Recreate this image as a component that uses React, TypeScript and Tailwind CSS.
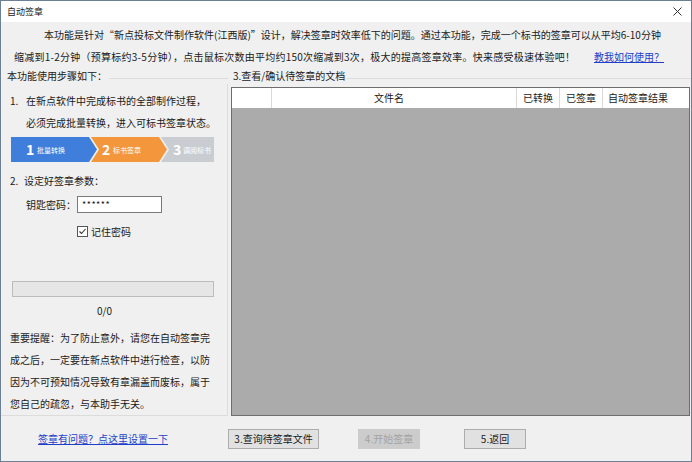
import React from 'react';

const StepBanner = () => (
  <svg width="203" height="25" viewBox="0 0 203 25" className="block">
    <polygon points="0,0 78,0 86,12.5 78,25 0,25" fill="#3f7fdb" />
    <polygon points="80,0 148,0 156,12.5 148,25 80,25 88,12.5" fill="#f4973c" />
    <polygon points="150,0 203,0 203,25 150,25 158,12.5" fill="#c9cdd2" />
    <g fill="#ffffff" fontFamily="'Noto Sans CJK SC', sans-serif">
      <text x="15" y="18" fontSize="14" fontWeight="bold">1</text>
      <text x="26" y="16" fontSize="7">批量转换</text>
      <text x="91" y="18" fontSize="14" fontWeight="bold">2</text>
      <text x="102" y="16" fontSize="7">标书签章</text>
      <text x="162" y="18" fontSize="14" fontWeight="bold">3</text>
      <text x="172" y="16" fontSize="7">调阅标书</text>
    </g>
  </svg>
);

const CheckBox = () => (
  <svg width="11" height="11" viewBox="0 0 11 11" className="block">
    <rect x="0.5" y="0.5" width="10" height="10" fill="#ffffff" stroke="#555555" />
    <path d="M2.5 5.5 L4.5 7.5 L8.5 3" fill="none" stroke="#333333" strokeWidth="1.1" />
  </svg>
);

export default function App() {
  return (
    <div className="w-[692px] h-[462px] flex flex-col bg-[#f0f0f0] border border-[#6d7f94] text-[10px] text-[#1a1a1a] overflow-hidden font-['Noto_Sans_CJK_SC','Liberation_Sans',sans-serif]">
      {/* title bar */}
      <div className="h-[21px] shrink-0 bg-white flex items-center justify-between pl-[6px] pr-[9px]">
        <span className="text-[9px]">自动签章</span>
        <svg width="9" height="9" viewBox="0 0 9 9">
          <path d="M0.5 0.5 L8.5 8.5 M8.5 0.5 L0.5 8.5" stroke="#333" strokeWidth="1" />
        </svg>
      </div>

      {/* intro */}
      <div className="pt-[2px] leading-[22px] shrink-0">
        <div className="pl-[43px] whitespace-nowrap">
          本功能是针对“新点投标文件制作软件(江西版)”设计，解决签章时效率低下的问题。通过本功能，完成一个标书的签章可以从平均6-10分钟
        </div>
        <div className="flex pl-[13px] pr-[27px] whitespace-nowrap">
          <span className="tracking-[0.25px]">缩减到1-2分钟（预算标约3-5分钟），点击鼠标次数由平均约150次缩减到3次，极大的提高签章效率。快来感受极速体验吧！</span>
          <a className="ml-auto text-[#1d3fc9] underline">教我如何使用？</a>
        </div>
      </div>

      {/* main */}
      <div className="h-[348px] shrink-0 flex">
        {/* left */}
        <div className="w-[227px] flex flex-col">
          <div className="h-[16px] flex items-center leading-[16px]">
            <span className="pl-[6px] pr-[2px] whitespace-nowrap">本功能使用步骤如下：</span>
            <div className="flex-1 border-t border-[#dcdcdc] mt-[4px]" />
          </div>
          <div className="flex-1 border-r border-b border-[#dcdcdc] flex flex-col">
            <div className="mt-[6px] flex leading-[22px] pl-[9px]">
              <span className="w-[16px]">1.</span>
              <div>
                <div>在新点软件中完成标书的全部制作过程，</div>
                <div>必须完成批量转换，进入可标书签章状态。</div>
              </div>
            </div>
            <div className="mt-[3px] ml-[10px]">
              <StepBanner />
            </div>
            <div className="mt-[8px] flex leading-[22px] pl-[9px]">
              <span className="w-[14px]">2.</span>
              <span>设定好签章参数：</span>
            </div>
            <div className="mt-[4px] flex items-center pl-[25px]">
              <span className="w-[51px]">钥匙密码：</span>
              <div className="w-[85px] h-[17px] bg-white border border-[#7a7a7a] flex items-center pl-[4px] text-[9px] tracking-[0.5px]">
                ******
              </div>
            </div>
            <div className="mt-[11px] h-[14px] flex items-center gap-[3px] pl-[76px]">
              <CheckBox />
              <span>记住密码</span>
            </div>
            <div className="mt-[43px] ml-[11px] w-[202px] h-[16px] bg-[#e6e6e6] border border-[#bcbcbc]" />
            <div className="mt-[6px] leading-[16px] pl-[96px]">0/0</div>
            <div className="mt-[8px] leading-[22px] pl-[9px] pr-[10px]">
              <div>重要提醒：为了防止意外，请您在自动签章完</div>
              <div>成之后，一定要在新点软件中进行检查，以防</div>
              <div>因为不可预知情况导致有章漏盖而废标，属于</div>
              <div>您自己的疏忽，与本助手无关。</div>
            </div>
          </div>
        </div>

        {/* right */}
        <div className="flex-1 flex flex-col">
          <div className="h-[16px] flex items-center leading-[16px]">
            <span className="pl-[5px] pr-[2px] whitespace-nowrap">3.查看/确认待签章的文档</span>
            <div className="flex-1 border-t border-[#dcdcdc] mt-[4px]" />
          </div>
          <div className="mt-[3px] ml-[3px] mr-[1px] flex-1 border border-[#6e6e6e] bg-[#ababab] flex flex-col">
            <div className="h-[20px] bg-white flex leading-[20px]">
              <div className="w-[39px]" />
              <div className="flex-1 border-l border-[#d9d9d9] text-center pr-[10px]">文件名</div>
              <div className="w-[43px] border-l border-[#d9d9d9] text-center">已转换</div>
              <div className="w-[43px] border-l border-[#d9d9d9] text-center">已签章</div>
              <div className="w-[87px] border-l border-[#d9d9d9] pl-[5px]">自动签章结果</div>
            </div>
          </div>
        </div>
      </div>

      {/* bottom */}
      <div className="flex-1 flex items-center">
        <a className="ml-[37px] text-[#1d3fc9] underline whitespace-nowrap">签章有问题？点这里设置一下</a>
        <button className="ml-[60px] w-[91px] h-[20px] bg-[#e1e1e1] border border-[#adadad] text-[10px]">3.查询待签章文件</button>
        <button className="ml-[39px] w-[62px] h-[20px] bg-[#cccccc] text-[#a3a3a3] text-[10px]">4.开始签章</button>
        <button className="ml-[44px] w-[62px] h-[20px] bg-[#e1e1e1] border border-[#adadad] text-[10px]">5.返回</button>
      </div>
    </div>
  );
}
